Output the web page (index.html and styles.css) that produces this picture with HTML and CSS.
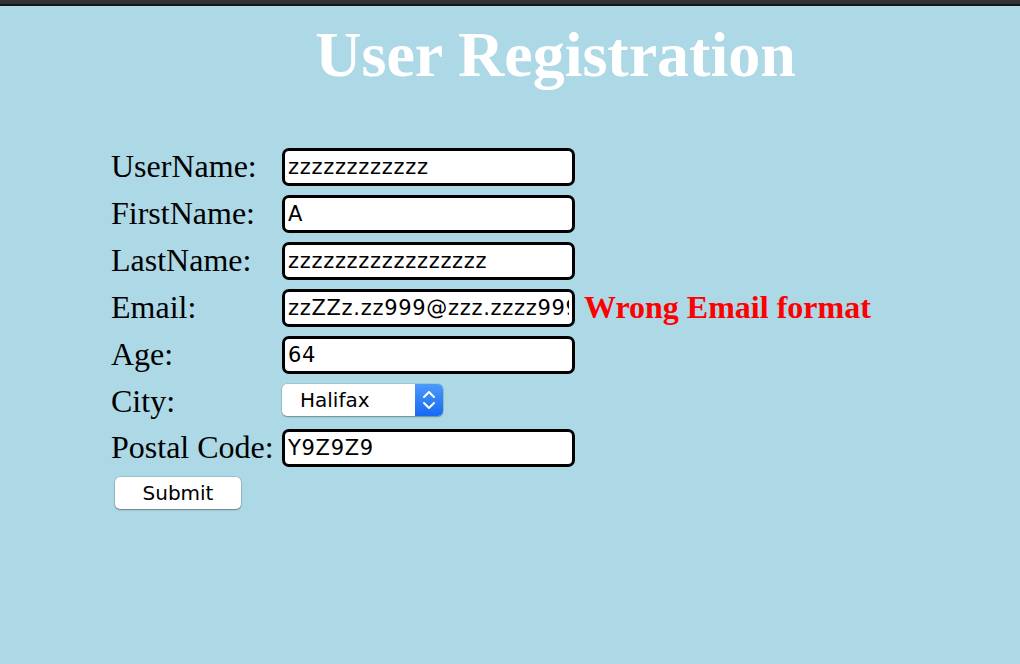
FILE: index.html
```html
<!DOCTYPE html>
<html lang="en">
<head>
<meta charset="utf-8">
<title>User Registration</title>
<link rel="stylesheet" href="styles.css">
</head>
<body>
<div class="chrome"></div>
<h1 class="title">User Registration</h1>
<form class="form">
  <div class="row"><label class="label">UserName:</label><input class="field" type="text" value="zzzzzzzzzzzz"></div>
  <div class="row"><label class="label">FirstName:</label><input class="field" type="text" value="A"></div>
  <div class="row"><label class="label">LastName:</label><input class="field" type="text" value="zzzzzzzzzzzzzzzzz"></div>
  <div class="row"><label class="label">Email:</label><input class="field" type="text" value="zzZZz.zz999@zzz.zzzz999.zz"><span class="error">Wrong Email format</span></div>
  <div class="row"><label class="label">Age:</label><input class="field" type="text" value="64"></div>
  <div class="row row-city"><label class="label">City:</label>
    <span class="select-wrap">
      <select class="select"><option>Halifax</option><option>Toronto</option><option>Vancouver</option></select>
      <span class="stepper"><svg width="28" height="32" viewBox="0 0 28 32"><path d="M9 13 L14 8 L19 13" fill="none" stroke="#fff" stroke-width="2" stroke-linecap="round" stroke-linejoin="round"/><path d="M9 19 L14 24 L19 19" fill="none" stroke="#fff" stroke-width="2" stroke-linecap="round" stroke-linejoin="round"/></svg></span>
    </span>
  </div>
  <div class="row"><label class="label">Postal Code:</label><input class="field" type="text" value="Y9Z9Z9"></div>
  <div class="row submit-row"><button class="submit" type="button">Submit</button></div>
</form>
</body>
</html>
```
FILE: styles.css
```css
html, body {
  margin: 0;
  padding: 0;
}
body {
  background: #add8e6;
  font-family: "Liberation Serif", "Times New Roman", serif;
  font-size: 32px;
  color: #000;
  width: 1020px;
  height: 664px;
  overflow: hidden;
}
.chrome {
  height: 4px;
  background: #333333;
  border-bottom: 2px solid #151515;
}
.title {
  margin: 12px 0 0;
  padding-left: 91px;
  text-align: center;
  font-size: 64px;
  font-weight: bold;
  line-height: 74px;
  color: #ffffff;
}
.form {
  margin-top: 56px;
  padding-left: 111px;
  display: flex;
  flex-direction: column;
  gap: 9px;
}
.row {
  display: flex;
  align-items: center;
}
.row-city {
  min-height: 37px;
}
.label {
  width: 171px;
  flex: none;
  line-height: 32px;
  margin-bottom: 2px;
}
.field {
  box-sizing: border-box;
  width: 293px;
  height: 38px;
  border: 3px solid #000;
  border-radius: 7px;
  padding: 0 3px;
  margin: 0;
  background: #fff;
  font-family: "DejaVu Sans", Verdana, sans-serif;
  font-size: 21px;
  letter-spacing: 0.7px;
  color: #000;
  outline: none;
}
.error {
  margin-left: 9px;
  line-height: 32px;
  margin-bottom: 2px;
  color: #ff0000;
  font-weight: bold;
}
.select-wrap {
  position: relative;
  display: block;
  width: 161px;
  height: 32px;
  margin-bottom: 3px;
}
.select {
  appearance: none;
  -webkit-appearance: none;
  display: block;
  box-sizing: border-box;
  width: 161px;
  height: 32px;
  border: none;
  border-radius: 5px;
  background: #fff;
  box-shadow: 0 0 0 0.5px rgba(0,0,0,0.15), 0 1px 1.5px rgba(0,0,0,0.3);
  padding: 0 0 0 18px;
  margin: 0;
  font-family: "DejaVu Sans", Verdana, sans-serif;
  font-size: 20px;
  color: #000;
  outline: none;
}
.stepper {
  position: absolute;
  right: 0;
  top: 0;
  width: 28px;
  height: 32px;
  border-radius: 0 5px 5px 0;
  background: linear-gradient(#4b9bfa, #1669f2);
  display: flex;
}
.submit-row {
  margin-top: 1px;
}
.submit {
  box-sizing: border-box;
  width: 126px;
  height: 32px;
  margin: 0 0 0 4px;
  padding: 0;
  border: none;
  border-radius: 5px;
  background: #fff;
  box-shadow: 0 0 0 0.5px rgba(0,0,0,0.2), 0 1px 1.5px rgba(0,0,0,0.35);
  font-family: "DejaVu Sans", Verdana, sans-serif;
  font-size: 20px;
  color: #000;
}
```
